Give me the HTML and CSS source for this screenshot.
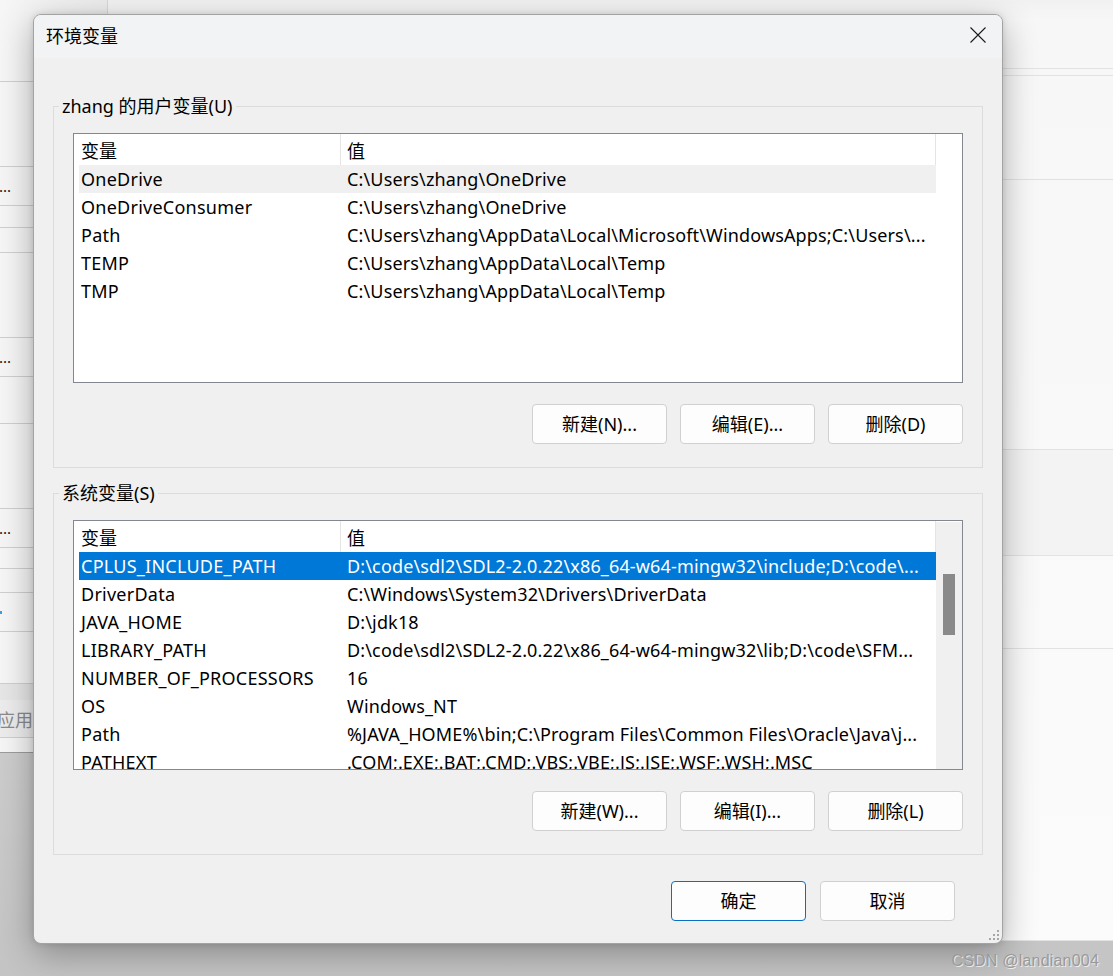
FILE: index.html
```html
<!DOCTYPE html>
<html lang="zh-CN">
<head>
<meta charset="utf-8">
<title>环境变量</title>
<link rel="stylesheet" href="styles.css">
</head>
<body>
<div class="bg-right">
  <div class="rl rl-a"></div>
  <div class="rl rl-b"></div>
  <div class="rl rl-c"></div>
  <div class="rl rl-band"></div>
  <div class="rl rl-d"></div>
</div>
<div class="bg-left">
  <div class="lrow" style="height:82px"></div>
  <div class="lrow" style="height:85px"></div>
  <div class="lrow lbtn" style="height:39px"><span class="dots">...</span></div>
  <div class="lrow" style="height:22px"></div>
  <div class="lrow" style="height:25px"></div>
  <div class="lrow" style="height:85px"></div>
  <div class="lrow lbtn" style="height:39px"><span class="dots">...</span></div>
  <div class="lrow" style="height:47px"></div>
  <div class="lrow" style="height:85px"></div>
  <div class="lrow lbtn" style="height:39px"><span class="dots">...</span></div>
  <div class="lrow" style="height:21px"></div>
  <div class="lrow" style="height:24px"></div>
  <div class="lrow" style="height:39px"><span class="bluedot"></span></div>
  <div class="lrow" style="height:52px"></div>
  <div class="lrow lband" style="height:16px"></div>
  <div class="lrow lapply" style="height:38px"><span class="apply">应用</span></div>
</div>

<div class="dialog">
  <div class="titlebar">
    <span class="title">环境变量</span>
    <svg class="close" width="16" height="16" viewBox="0 0 16 16"><path d="M0.5 0.5 L15.5 15.5 M15.5 0.5 L0.5 15.5" stroke="#1a1a1a" stroke-width="1.1" fill="none"/></svg>
  </div>
  <div class="content">
    <div class="group">
      <div class="glabel">zhang 的用户变量(U)</div>
      <div class="list">
        <div class="lmain">
          <div class="lhead"><div class="c1">变量</div><div class="c2">值</div></div>
          <div class="lrowi hover"><div class="c1">OneDrive</div><div class="c2">C:\Users\zhang\OneDrive</div></div>
          <div class="lrowi"><div class="c1">OneDriveConsumer</div><div class="c2">C:\Users\zhang\OneDrive</div></div>
          <div class="lrowi"><div class="c1">Path</div><div class="c2">C:\Users\zhang\AppData\Local\Microsoft\WindowsApps;C:\Users\...</div></div>
          <div class="lrowi"><div class="c1">TEMP</div><div class="c2">C:\Users\zhang\AppData\Local\Temp</div></div>
          <div class="lrowi"><div class="c1">TMP</div><div class="c2">C:\Users\zhang\AppData\Local\Temp</div></div>
        </div>
      </div>
      <div class="btnrow">
        <button class="btn">新建(N)...</button>
        <button class="btn">编辑(E)...</button>
        <button class="btn">删除(D)</button>
      </div>
    </div>

    <div class="group group2">
      <div class="glabel">系统变量(S)</div>
      <div class="list">
        <div class="lmain">
          <div class="lhead"><div class="c1">变量</div><div class="c2">值</div></div>
          <div class="lrowi sel"><div class="c1">CPLUS_INCLUDE_PATH</div><div class="c2">D:\code\sdl2\SDL2-2.0.22\x86_64-w64-mingw32\include;D:\code\...</div></div>
          <div class="lrowi"><div class="c1">DriverData</div><div class="c2">C:\Windows\System32\Drivers\DriverData</div></div>
          <div class="lrowi"><div class="c1">JAVA_HOME</div><div class="c2">D:\jdk18</div></div>
          <div class="lrowi"><div class="c1">LIBRARY_PATH</div><div class="c2">D:\code\sdl2\SDL2-2.0.22\x86_64-w64-mingw32\lib;D:\code\SFM...</div></div>
          <div class="lrowi"><div class="c1">NUMBER_OF_PROCESSORS</div><div class="c2">16</div></div>
          <div class="lrowi"><div class="c1">OS</div><div class="c2">Windows_NT</div></div>
          <div class="lrowi"><div class="c1">Path</div><div class="c2">%JAVA_HOME%\bin;C:\Program Files\Common Files\Oracle\Java\j...</div></div>
          <div class="lrowi"><div class="c1">PATHEXT</div><div class="c2">.COM;.EXE;.BAT;.CMD;.VBS;.VBE;.JS;.JSE;.WSF;.WSH;.MSC</div></div>
        </div>
        <div class="vscroll"><div class="thumb"></div></div>
      </div>
      <div class="btnrow">
        <button class="btn">新建(W)...</button>
        <button class="btn">编辑(I)...</button>
        <button class="btn">删除(L)</button>
      </div>
    </div>

    <div class="footer">
      <button class="btn primary">确定</button>
      <button class="btn">取消</button>
    </div>
  </div>
  <svg class="grip" width="12" height="12" viewBox="0 0 12 12">
    <rect x="9" y="1" width="2" height="2" fill="#a6a6a6"/>
    <rect x="5" y="5" width="2" height="2" fill="#a6a6a6"/>
    <rect x="9" y="5" width="2" height="2" fill="#a6a6a6"/>
    <rect x="1" y="9" width="2" height="2" fill="#a6a6a6"/>
    <rect x="5" y="9" width="2" height="2" fill="#a6a6a6"/>
    <rect x="9" y="9" width="2" height="2" fill="#a6a6a6"/>
  </svg>
</div>

<div class="watermark">CSDN @landian004</div>
</body>
</html>
```

FILE: styles.css
```css
* { box-sizing: border-box; }
html, body { margin: 0; padding: 0; }
body {
  width: 1113px;
  height: 976px;
  overflow: hidden;
  position: relative;
  background: linear-gradient(to bottom, #d6d6d6 0%, #cfcfcf 70%, #c4c4c4 100%);
  font-family: "Noto Sans", "Noto Sans CJK SC", sans-serif;
  color: #000;
}

/* background windows */
.bg-right {
  position: absolute;
  left: 108px;
  top: 0;
  right: 0;
  height: 941px;
  background: linear-gradient(to bottom, #f1f1f1 0px, #f7f7f7 20px, #fbfbfb 100%);
  border-bottom: 1px solid #e2e2e2;
}
.rl { position: absolute; left: 0; right: 0; border-top: 1px solid #e2e2e2; }
.rl-a { top: 68px; }
.rl-b { top: 75px; }
.rl-c { top: 179px; }
.rl-band { top: 449px; height: 107px; background: #f3f3f3; border-bottom: 1px solid #e2e2e2; }
.rl-d { top: 648px; }

.bg-left {
  position: absolute;
  left: 0;
  top: 0;
  width: 108px;
  height: 753px;
  background: linear-gradient(to right, #f6f6f6, #ececec);
  border-right: 1px solid #d8d8d8;
  border-bottom: 1px solid #9c9c9c;
  display: flex;
  flex-direction: column;
  overflow: hidden;
}
.lrow {
  flex: none;
  border-bottom: 1px solid #cfcfcf;
  display: flex;
  align-items: center;
  font-size: 16px;
}
.lbtn { background: #f5f5f5; }
.dots { margin-left: -1px; font-size: 15px; letter-spacing: 0; color: #111; }
.bluedot { width: 2px; height: 3px; background: #3aa0e6; margin-left: 0; }
.lband { background: #e6e6e6; border-bottom: none; }
.lapply { background: #ececec; }
.apply { margin-left: -3px; color: #8a8a8a; font-size: 18px; font-family: "Noto Sans CJK SC", sans-serif; }

/* dialog */
.dialog {
  position: absolute;
  left: 33px;
  top: 14px;
  width: 970px;
  height: 930px;
  background: #f0f0f0;
  border: 1px solid #a3a3a3;
  border-radius: 8px;
  box-shadow: 0 10px 34px rgba(0, 0, 0, 0.30), 0 0 6px rgba(0, 0, 0, 0.12);
  overflow: hidden;
}
.titlebar {
  height: 43px;
  background: #f2f3f5;
  display: flex;
  align-items: center;
  justify-content: space-between;
  padding: 0 16px 0 12px;
}
.title {
  font-size: 18px;
  font-family: "Noto Sans CJK SC", sans-serif;
  line-height: 24px;
  margin-top: -4px;
}
.close { display: block; margin-top: -3px; }

.content {
  padding: 48px 19px 0 19px;
}
.group {
  height: 362px;
  border: 1px solid #dcdcdc;
  padding: 0 19px 0 19px;
}
.group2 { margin-top: 25px; }
.glabel {
  width: fit-content;
  margin: -13px 0 0 -14px;
  padding: 0 3px;
  background: #f0f0f0;
  font-size: 18px;
  line-height: 24px;
  white-space: nowrap;
}

.list {
  margin-top: 15px;
  height: 250px;
  border: 1px solid #828790;
  background: #fff;
  display: flex;
  overflow: hidden;
  font-size: 18px;
}
.lmain {
  width: 862px;
  flex: none;
  padding-left: 5px;
  overflow: hidden;
}
.lhead {
  display: flex;
  height: 31px;
  align-items: center;
}
.lhead .c1 { height: 100%; border-right: 1px solid #e5e5e5; display: flex; align-items: center; letter-spacing: 0; }
.lhead .c2 { height: 100%; border-right: 1px solid #e5e5e5; display: flex; align-items: center; letter-spacing: 0; }
.c1 {
  width: 262px;
  flex: none;
  padding-left: 2px;
  white-space: nowrap;
  overflow: hidden;
  letter-spacing: 0.25px;
}
.c2 {
  flex: 1;
  padding-left: 6px;
  white-space: nowrap;
  overflow: hidden;
  letter-spacing: 0.15px;
}
.lrowi {
  display: flex;
  height: 28px;
  align-items: center;
  line-height: 28px;
}
.lrowi.hover { background: #f0f0f0; }
.lrowi.sel { background: #0078d7; color: #fff; }

.vscroll {
  width: 27px;
  flex: none;
  background: #f0f0f0;
  border-top: 1px solid #fff;
  padding: 52px 0 0 7px;
}
.thumb {
  width: 12px;
  height: 61px;
  background: #8a8a8a;
}

.btnrow {
  margin-top: 21px;
  display: flex;
  justify-content: flex-end;
  gap: 13px;
  padding-right: 0;
}
.btn {
  width: 135px;
  height: 40px;
  border: 1px solid #d0d0d0;
  border-radius: 4px;
  background: #fdfdfd;
  font-family: "Noto Sans", "Noto Sans CJK SC", sans-serif;
  font-size: 18px;
  color: #000;
  padding: 0;
  line-height: 1;
}
.btn.primary { border-color: #0a6fc2; }

.footer {
  margin-top: 26px;
  display: flex;
  justify-content: flex-end;
  gap: 14px;
  padding-right: 28px;
}

.grip {
  position: absolute;
  right: 2px;
  bottom: 2px;
}

.watermark {
  position: absolute;
  right: 14px;
  bottom: 6px;
  font-family: "Liberation Sans", Arial, sans-serif;
  font-size: 16px;
  color: #9a9a9a;
  text-shadow: 1px 1px 0 rgba(255, 255, 255, 0.7);
  letter-spacing: 0.2px;
}
```
